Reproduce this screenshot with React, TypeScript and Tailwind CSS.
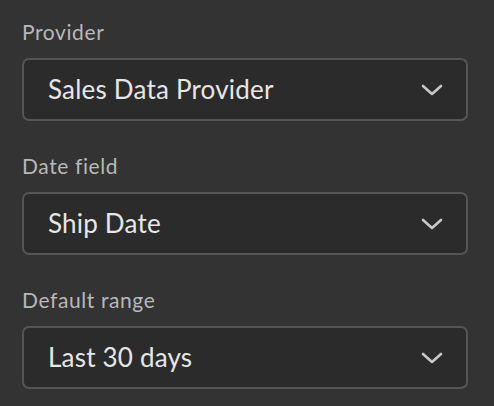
import React from 'react';

const fields = [
  { label: 'Provider', value: 'Sales Data Provider' },
  { label: 'Date field', value: 'Ship Date' },
  { label: 'Default range', value: 'Last 30 days' },
];

function Chevron() {
  return (
    <svg width="22" height="12" viewBox="0 0 22 12" fill="none">
      <polyline points="2,2 11,10 20,2" stroke="#c8c8c8" strokeWidth="2.6" strokeLinecap="round" strokeLinejoin="round" />
    </svg>
  );
}

export default function App() {
  return (
    <div className="w-[494px] h-[406px] bg-[#333333] pt-[20px] px-[22px] flex flex-col gap-[33px]" style={{ fontFamily: 'Lato, "Noto Sans", sans-serif' }}>
      {fields.map((f) => (
        <div key={f.label} className="flex flex-col">
          <label className="text-[21px] leading-[24px] tracking-[0.6px] text-[#b8b8b8] mb-[14px]">{f.label}</label>
          <div className="w-[446px] h-[63px] rounded-[7px] border-2 border-[#555555] bg-[#2b2b2b] flex items-center justify-between pl-[24px] pr-[23px]">
            <span className="text-[26px] tracking-[0.2px] text-[#e6e6e6]">{f.value}</span>
            <Chevron />
          </div>
        </div>
      ))}
    </div>
  );
}
